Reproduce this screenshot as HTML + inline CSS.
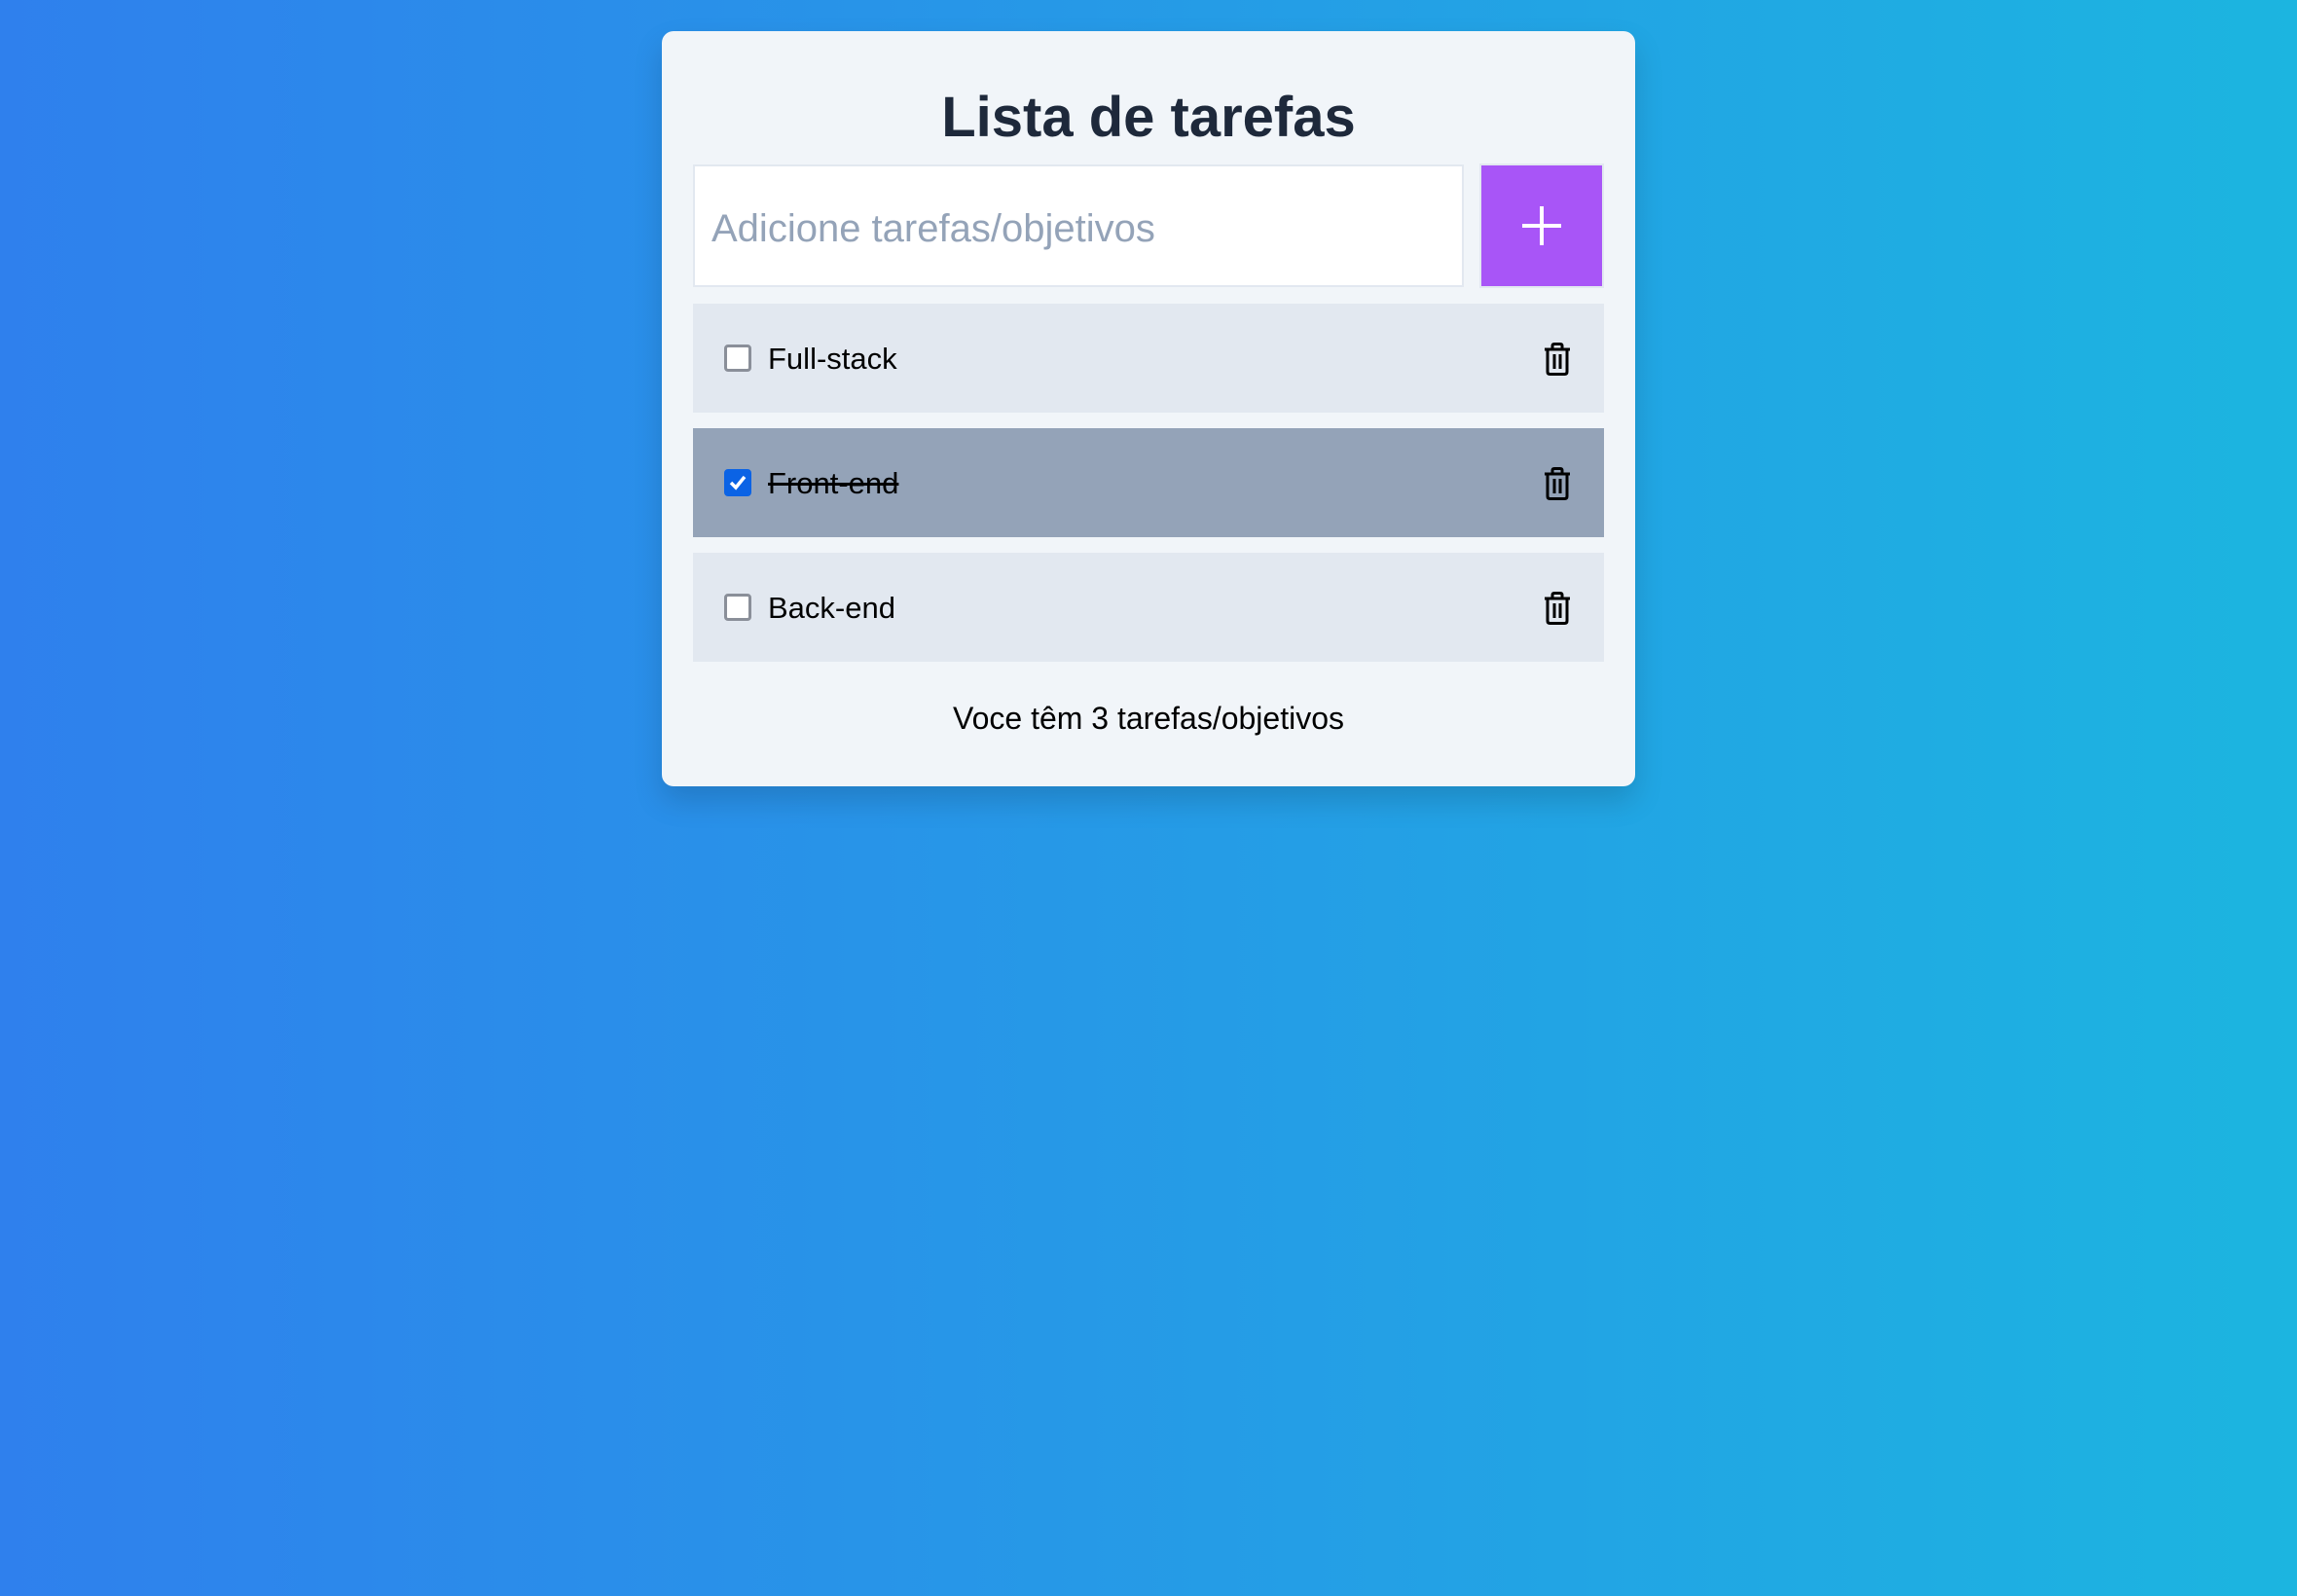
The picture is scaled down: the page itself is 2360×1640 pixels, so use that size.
<!DOCTYPE html>
<html><head><meta charset="utf-8"><style>
html,body{margin:0;padding:0}
body{width:2360px;height:1640px;background:linear-gradient(90deg,#2f80ed,#1cb5e0);font-family:"Liberation Sans",sans-serif;position:relative;overflow:hidden}
.card{position:absolute;left:680px;top:32px;width:1000px;height:776px;background:#f1f5f9;border-radius:12px;box-shadow:0 15px 30px rgba(0,0,0,0.15)}
h1{position:absolute;left:0;right:0;top:54px;margin:0;text-align:center;font-size:58px;font-weight:bold;color:#1e293b;line-height:70px}
.input{position:absolute;left:32px;top:137px;width:792px;height:126px;background:#fff;border:2px solid #e2e8f0;box-sizing:border-box}
.input span{position:absolute;left:17px;top:42px;font-size:40px;color:#94a3b8;line-height:44px}
.btn{position:absolute;left:840px;top:136px;width:128px;height:128px;background:#a855f7;border:2px solid #e2e8f0;box-sizing:border-box}
.row{position:absolute;left:32px;width:936px;height:112px;background:#e2e8f0}
.row.done{background:#94a3b8}
.cb{position:absolute;left:32px;top:42px;width:28px;height:28px;box-sizing:border-box;border:3px solid #8a8f99;border-radius:4px;background:#fff}
.done .cb{background:#0b63e5;border-color:#0b63e5}
.txt{position:absolute;left:77px;top:37px;font-size:31px;line-height:40px;color:#000}
.done .txt{text-decoration:line-through;text-decoration-thickness:3px}
.trash{position:absolute;left:874px;top:40px}
.foot{position:absolute;left:0;right:0;top:686px;text-align:center;font-size:32px;line-height:40px;color:#000}
</style></head><body>
<div class="card">
<h1>Lista de tarefas</h1>
<div class="input"><span>Adicione tarefas/objetivos</span></div>
<div class="btn"><svg width="124" height="124" viewBox="0 0 124 124" style="position:absolute;left:0;top:0"><path d="M62 42V82M42 62H82" stroke="#fff" stroke-width="4"/></svg></div>
<div class="row" style="top:280px"><div class="cb"></div><div class="txt">Full-stack</div>
<svg class="trash" width="28" height="34" viewBox="0 0 28 34"><path d="M1 7H27M9 7V3.5Q9 1.5 11 1.5H17Q19 1.5 19 3.5V7M4 7V30Q4 32.5 6.5 32.5H21.5Q24 32.5 24 30V7M11 12V27M17 12V27" fill="none" stroke="#000" stroke-width="3"/></svg></div>
<div class="row done" style="top:408px"><div class="cb"><svg width="22" height="22" viewBox="0 0 22 22" style="position:absolute;left:0;top:0"><path d="M4 11L9 16L18 5" fill="none" stroke="#fff" stroke-width="3.5"/></svg></div><div class="txt">Front-end</div>
<svg class="trash" width="28" height="34" viewBox="0 0 28 34"><path d="M1 7H27M9 7V3.5Q9 1.5 11 1.5H17Q19 1.5 19 3.5V7M4 7V30Q4 32.5 6.5 32.5H21.5Q24 32.5 24 30V7M11 12V27M17 12V27" fill="none" stroke="#000" stroke-width="3"/></svg></div>
<div class="row" style="top:536px"><div class="cb"></div><div class="txt">Back-end</div>
<svg class="trash" width="28" height="34" viewBox="0 0 28 34"><path d="M1 7H27M9 7V3.5Q9 1.5 11 1.5H17Q19 1.5 19 3.5V7M4 7V30Q4 32.5 6.5 32.5H21.5Q24 32.5 24 30V7M11 12V27M17 12V27" fill="none" stroke="#000" stroke-width="3"/></svg></div>
<div class="foot">Voce têm 3 tarefas/objetivos</div>
</div>
</body></html>
